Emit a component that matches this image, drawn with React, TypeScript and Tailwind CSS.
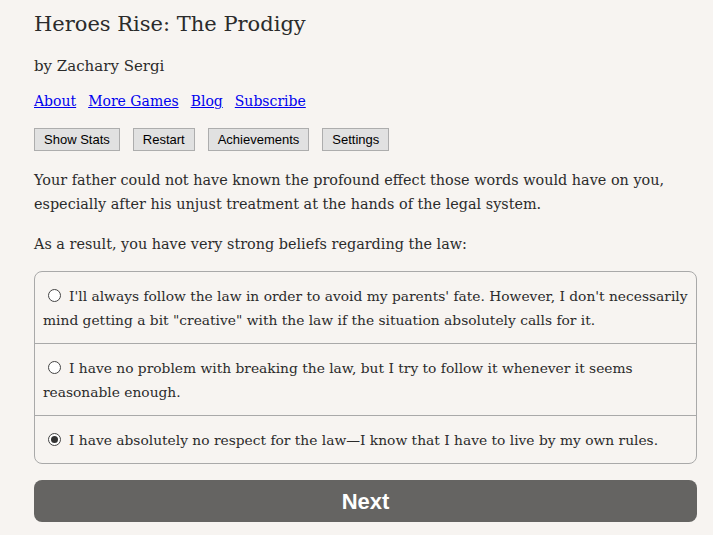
import { useState } from 'react';

const serif = { fontFamily: '"DejaVu Serif", serif' };

const options = [
  `I'll always follow the law in order to avoid my parents' fate. However, I don't necessarily mind getting a bit "creative" with the law if the situation absolutely calls for it.`,
  'I have no problem with breaking the law, but I try to follow it whenever it seems reasonable enough.',
  'I have absolutely no respect for the law—I know that I have to live by my own rules.',
];

export default function App() {
  const [choice, setChoice] = useState(2);

  return (
    <div className="min-h-screen bg-[#f7f4f1] text-[#2b2b2b]" style={serif}>
      <div className="pl-[34px] pr-4 pt-[9px] pb-4">
        <h1 className="text-[21px] leading-[30px]">Heroes Rise: The Prodigy</h1>
        <p className="mt-[15px] text-[15px] leading-[24px]">by Zachary Sergi</p>
        <div className="mt-[11px] flex gap-[12px] text-[14px] leading-[24px]">
          <a href="#" className="text-[#0000ee] underline">About</a>
          <a href="#" className="text-[#0000ee] underline">More Games</a>
          <a href="#" className="text-[#0000ee] underline">Blog</a>
          <a href="#" className="text-[#0000ee] underline">Subscribe</a>
        </div>
        <div className="mt-[15px] flex gap-[13px] font-['Liberation_Sans',sans-serif] text-[13px] text-black">
          {['Show Stats', 'Restart', 'Achievements', 'Settings'].map((b) => (
            <button key={b} className="h-[23px] border border-[#adadad] bg-[#e1e1e1] px-[9px]">
              {b}
            </button>
          ))}
        </div>
        <p className="mt-[17px] text-[14.4px] leading-[24px]">
          Your father could not have known the profound effect those words would have on you, especially after his unjust treatment at the hands of the legal system.
        </p>
        <p className="mt-[16px] text-[14.4px] leading-[24px]">
          As a result, you have very strong beliefs regarding the law:
        </p>
        <div className="mt-[15px] rounded-[8px] border border-[#a9a9a9] text-[13.8px] leading-[24px]">
          {options.map((o, i) => (
            <label
              key={i}
              className={`block cursor-pointer px-[8px] pt-[12px] pb-[11px] ${i > 0 ? 'border-t border-[#a9a9a9]' : ''}`}
            >
              <span className="relative top-[1px] ml-[5px] mr-[8px] inline-block h-[13px] w-[13px] rounded-full border border-[#444] bg-white align-baseline leading-none">
                {choice === i && (
                  <span className="absolute left-[2px] top-[2px] h-[7px] w-[7px] rounded-full bg-[#333]" />
                )}
              </span>
              <input type="radio" className="hidden" checked={choice === i} onChange={() => setChoice(i)} />
              {o}
            </label>
          ))}
        </div>
        <button className="mt-[16px] h-[42px] w-full rounded-[8px] bg-[#656462] font-['Liberation_Sans',sans-serif] text-[22px] font-bold text-white">
          Next
        </button>
      </div>
    </div>
  );
}
